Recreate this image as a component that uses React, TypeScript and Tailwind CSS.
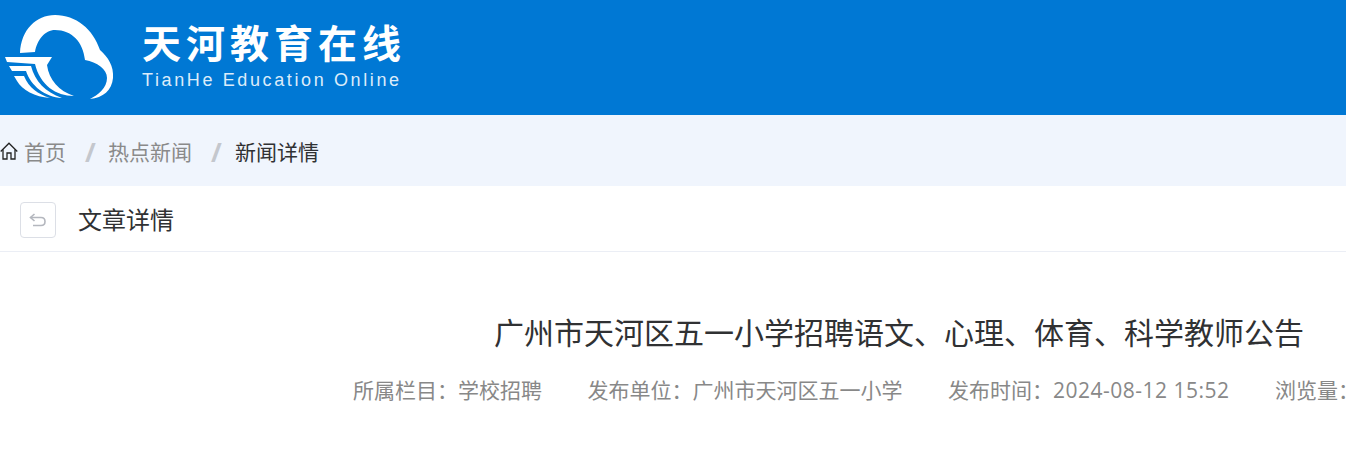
export default function App() {
  const font = { fontFamily: '"Open Sans", "Noto Sans CJK SC", sans-serif' };
  return (
    <div className="w-[1346px] h-[472px] overflow-hidden bg-white" style={font}>
      <header className="h-[115px] bg-[#0078d4] flex items-start">
        <svg width="120" height="115" viewBox="0 0 120 115" className="shrink-0" fill="#fff">
          <path d="M20 53C21 30 36 15 55 15C76 15 93 29 100 50C108 57 114 66 113 78C112 90 103 98 90 99C98 95 107 88 107 78C107 69 97 62 85 60C83 42 72 30 55 30C45 30 37 40 35 52Z" />
          <path d="M5 57H52L47 65C49 80 59 91 74 96C56 96 40 85 35 64L7 62Z" />
          <path d="M9 66H31C35 81 45 92 62 98C45 97 31 86 26 71H12Z" />
          <path d="M14 76H24C29 88 38 94 50 98C35 97 22 90 17 81Z" />
        </svg>
        <div className="ml-[22px] mt-[19px] text-white">
          <div className="flex w-[259px] justify-between text-[39px] leading-[48px] font-bold">
            <span>天</span><span>河</span><span>教</span><span>育</span><span>在</span><span>线</span>
          </div>
          <div className="mt-[2px] text-[18px] leading-[22px] tracking-[2.62px] text-[#dcecfa] whitespace-nowrap" style={{ fontFamily: '"Liberation Sans", sans-serif' }}>TianHe Education Online</div>
        </div>
      </header>

      <nav className="h-[71px] bg-[#f0f5fd] flex items-center text-[21px] leading-[30px] text-[#8a8a8a] pt-[3px]">
        <svg width="18" height="18" viewBox="0 0 18 18" fill="none" stroke="#222" strokeWidth="1.3" className="shrink-0 -mt-[3px]">
          <path d="M0.7 9.5L9 1.2L17.3 9.5" />
          <path d="M3 7.5V17H7V11H11V17H15V7.5" />
        </svg>
        <span className="ml-[6px]">首页</span>
        <span className="ml-[19px] w-[12px] text-[26px] leading-[30px] font-bold text-[#c4c7cd]">/</span>
        <span className="ml-[11px]">热点新闻</span>
        <span className="ml-[19px] w-[12px] text-[26px] leading-[30px] font-bold text-[#c4c7cd]">/</span>
        <span className="ml-[12px] text-[#303133]">新闻详情</span>
      </nav>

      <div className="h-[66px] border-b border-[#ebeef5] flex items-center pl-[20px] pt-[2px]">
        <div className="w-[36px] h-[36px] rounded-[4px] border border-[#dcdfe6] flex items-center justify-center">
          <svg width="18" height="14" viewBox="0 0 18 14" fill="none" stroke="#b4b7be" strokeWidth="1.6">
            <path d="M5.5 1L1.5 4.5L5.5 8" />
            <path d="M1.5 4.5H12C14.5 4.5 16 6.2 16 8.5C16 10.8 14.5 12.5 12 12.5H4" />
          </svg>
        </div>
        <div className="ml-[22px] text-[24px] text-[#303133]">文章详情</div>
      </div>

      <main className="pt-[56px]">
        <h1 className="w-[1798px] text-center text-[30px] leading-[50px] font-normal text-[#303133]">广州市天河区五一小学招聘语文、心理、体育、科学教师公告</h1>
        <div className="mt-[17px] pl-[353px] flex gap-[45.5px] text-[21px] leading-[30px] text-[#888888] whitespace-nowrap">
          <span>{"所属栏目\uFF1A学校招聘"}</span>
          <span>{"发布单位\uFF1A广州市天河区五一小学"}</span>
          <span>{"发布时间\uFF1A"}<span className="tracking-[0.5px]">2024-08-12 15:52</span></span>
          <span>{"浏览量\uFF1A"}</span>
        </div>
      </main>
    </div>
  );
}
